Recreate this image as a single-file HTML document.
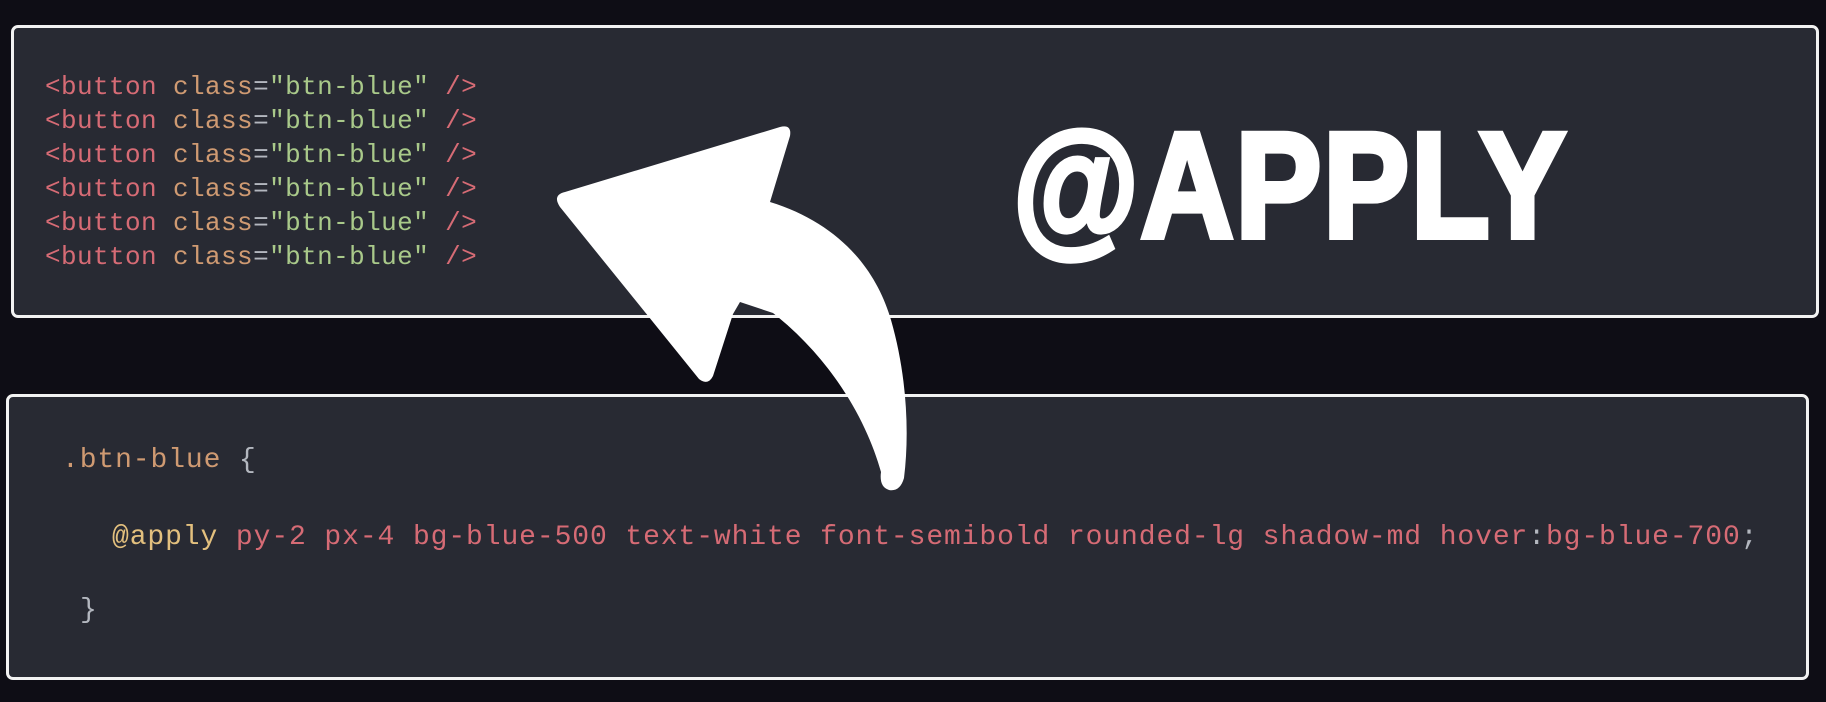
<!DOCTYPE html>
<html><head><meta charset="utf-8"><style>
html,body{margin:0;padding:0;}
body{width:1826px;height:702px;background:#0e0d15;position:relative;overflow:hidden;font-family:"Liberation Mono",monospace;}
.box{position:absolute;background:#282a33;border:3px solid #f2f2f2;border-radius:7px;box-sizing:border-box;}
.l{position:absolute;white-space:pre;}
.r{color:#d66b75}.o{color:#cf9a72}.g{color:#a9c98a}.w{color:#b3b7bf}.y{color:#e3c07e}
.top .l{font-size:26px;letter-spacing:0.4px;left:45px;}
.bot .l{font-size:28px;letter-spacing:0.9px;}
.big{position:absolute;left:1013px;top:110px;font-family:"Liberation Sans",sans-serif;font-weight:bold;font-size:150px;color:#fff;transform:scaleX(0.86);transform-origin:0 0;-webkit-text-stroke:6px #fff;letter-spacing:2px;line-height:1;}
</style></head><body>
<div class="box" style="left:11px;top:25px;width:1808px;height:293px"></div>
<div class="box" style="left:6px;top:394px;width:1803px;height:286px"></div>
<div class="top">
<div class="l" style="top:72px"><span class="r">&lt;button</span> <span class="o">class</span><span class="w">=</span><span class="g">"btn-blue"</span> <span class="r">/&gt;</span></div>
<div class="l" style="top:106px"><span class="r">&lt;button</span> <span class="o">class</span><span class="w">=</span><span class="g">"btn-blue"</span> <span class="r">/&gt;</span></div>
<div class="l" style="top:140px"><span class="r">&lt;button</span> <span class="o">class</span><span class="w">=</span><span class="g">"btn-blue"</span> <span class="r">/&gt;</span></div>
<div class="l" style="top:174px"><span class="r">&lt;button</span> <span class="o">class</span><span class="w">=</span><span class="g">"btn-blue"</span> <span class="r">/&gt;</span></div>
<div class="l" style="top:208px"><span class="r">&lt;button</span> <span class="o">class</span><span class="w">=</span><span class="g">"btn-blue"</span> <span class="r">/&gt;</span></div>
<div class="l" style="top:242px"><span class="r">&lt;button</span> <span class="o">class</span><span class="w">=</span><span class="g">"btn-blue"</span> <span class="r">/&gt;</span></div>
</div>
<div class="bot">
<div class="l" style="left:62px;top:445px"><span class="o">.btn-blue</span> <span class="w">{</span></div>
<div class="l" style="left:112px;top:522px"><span class="y">@apply</span> <span class="r">py-2 px-4 bg-blue-500 text-white font-semibold rounded-lg shadow-md hover</span><span class="w">:</span><span class="r">bg-blue-700</span><span class="w">;</span></div>
<div class="l" style="left:80px;top:595px"><span class="w">}</span></div>
</div>
<div class="big">@APPLY</div>
<svg width="1826" height="702" style="position:absolute;left:0;top:0">
<path fill="#fff" d="M565,192 L780,127 Q792,124 790,136 L770,202 C835,222 875,265 891,320 C906,372 910,430 904,478 Q900,492 889,490 Q879,487 881,472 C868,425 835,362 773,313 L740,302 L733,314 L713,376 Q708,386 699,379 L560,207 Q552,195 565,192 Z"/>
</svg>
</body></html>
